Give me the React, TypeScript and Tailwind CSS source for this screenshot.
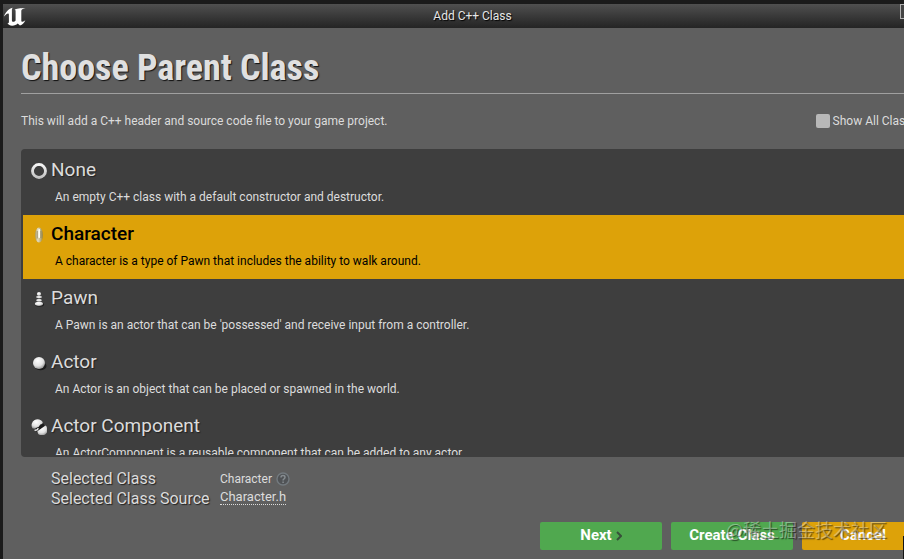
import { useState } from "react";
import type { ReactNode } from "react";

type ParentClass = { name: string; description: string; icon: ReactNode };

function Gradients() {
  return (
    <svg width="0" height="0" className="absolute" aria-hidden="true">
      <defs>
        <radialGradient id="ball" cx="0.4" cy="0.3" r="0.75">
          <stop offset="0" stopColor="#ffffff" />
          <stop offset="0.6" stopColor="#e2e2e2" />
          <stop offset="1" stopColor="#8c8c8c" />
        </radialGradient>
        <linearGradient id="ring" x1="0" y1="0" x2="0" y2="1">
          <stop offset="0" stopColor="#f4f4f4" />
          <stop offset="1" stopColor="#c4c4c4" />
        </linearGradient>
        <linearGradient id="capsule" x1="0" y1="0" x2="1" y2="0">
          <stop offset="0" stopColor="#a89858" />
          <stop offset="0.35" stopColor="#e3dcc0" />
          <stop offset="0.65" stopColor="#c4b888" />
          <stop offset="1" stopColor="#94823e" />
        </linearGradient>
      </defs>
    </svg>
  );
}

const NoneIcon = (
  <svg viewBox="0 0 16 16" className="size-4">
    <circle cx="8" cy="8.6" r="6.4" fill="none" stroke="#2a2a2a" strokeWidth="2.6" />
    <circle cx="8" cy="8" r="6.5" fill="none" stroke="url(#ring)" strokeWidth="2.9" />
  </svg>
);

const CharacterIcon = (
  <svg viewBox="0 0 16 16" className="size-4">
    <ellipse cx="8" cy="8" rx="4" ry="7.600" fill="url(#capsule)" />
    <path d="M8.200 3v7" stroke="#fffdf0" strokeWidth="1.800" strokeLinecap="round" />
    <path d="M6.300 4v7.500M9.900 4v7" stroke="#8d835c" strokeWidth="0.700" />
  </svg>
);

const PawnIcon = (
  <svg viewBox="0 0 16 16" className="size-4">
    <ellipse cx="8.600" cy="13.500" rx="4.400" ry="2.200" fill="#1c1c1c" />
    <circle cx="8" cy="3" r="2.100" fill="url(#ball)" />
    <ellipse cx="8" cy="5.900" rx="3" ry="1" fill="#f0f0f0" />
    <path d="M7 7h2l.7 3H6.300z" fill="#666" />
    <ellipse cx="8" cy="9.200" rx="2.800" ry="1.200" fill="#e6e6e6" />
    <ellipse cx="8" cy="12.800" rx="4.100" ry="2.100" fill="url(#ball)" />
  </svg>
);

const ActorIcon = (
  <svg viewBox="0 0 16 16" className="size-4">
    <ellipse cx="9.500" cy="11" rx="6" ry="4.300" fill="#1c1c1c" />
    <circle cx="8" cy="8" r="6" fill="url(#ball)" />
  </svg>
);

const ActorComponentIcon = (
  <svg viewBox="0 0 16 16" className="size-4">
    <path d="M3 9.500 12.500 4.500 13.500 7 6 13z" fill="#1c1c1c" />
    <path d="M1.400 9.300A6 6 0 0 1 11.900 3.200q-.2 2-2.700 2.400-1 2.600-3.300 3-1.300 1.800-4.500.7z" fill="url(#ball)" />
    <path d="M3.600 11.300q2.800.2 3.700-2" stroke="#eee" strokeWidth="1.600" fill="none" />
    <path d="M6.300 12.300 14.600 6.500A5.600 5.600 0 0 1 7.200 15z" fill="url(#ball)" />
  </svg>
);

const parentClasses: ParentClass[] = [
  { name: "None", description: "An empty C++ class with a default constructor and destructor.", icon: NoneIcon },
  { name: "Character", description: "A character is a type of Pawn that includes the ability to walk around.", icon: CharacterIcon },
  { name: "Pawn", description: "A Pawn is an actor that can be 'possessed' and receive input from a controller.", icon: PawnIcon },
  { name: "Actor", description: "An Actor is an object that can be placed or spawned in the world.", icon: ActorIcon },
  { name: "Actor Component", description: "An ActorComponent is a reusable component that can be added to any actor.", icon: ActorComponentIcon },
];

function TitleBar() {
  return (
    <header className="relative flex h-6 items-center justify-center bg-linear-to-b from-[#505050] to-[#242424]">
      <svg viewBox="0 0 24 20" className="absolute left-0 top-[3px] h-5 w-6" fill="#fff" role="img" aria-label="Unreal Engine">
        <path d="M1 9.500C2.200 5.800 5 2 9.700.800 8.900 1.700 8.900 2.600 8.900 3.900v9.300c0 1 .6 1.600 1.400 1.600.9 0 1.700-.6 2.300-1.400V4.200c0-1-.4-1.400-1.300-1.400C13 1.500 17.500 1 22.500.900c-2.900.8-4.200 1.600-4.200 2.800v9.500c0 1 .4 1.500 1.100 1.500 1 0 2-.5 3-1.700-1.100 2.900-2.900 4.700-5.400 5.400l-2.300-1.900c-1.500 1.300-3 2.200-5.600 2.200-2.200 0-3.500-.8-4.700-2.400 1-.1 1.500-.5 1.500-1.600V7.700c0-.9-.3-1.300-1-1.300-1 0-2 1.200-3.900 3.100z" />
      </svg>
      <span className="text-xs text-[#e6e6e6] [text-shadow:1px_1px_1px_#000]">Add C++ Class</span>
      <button type="button" aria-label="Minimize" className="absolute right-1.5 top-0 h-[15px] w-9 border border-[#b0b0b0] bg-[#444]" />
    </header>
  );
}

export default function App() {
  const [selected, setSelected] = useState("Character");

  return (
    <div className="relative h-screen overflow-hidden bg-[#1b1b1b] font-['Roboto','Liberation_Sans',sans-serif] text-xs text-[#dcdcdc]">
      <Gradients />
      <div className="flex h-full w-[calc(100%+38px)] flex-col pl-[3px] pt-1">
        <TitleBar />
        <main className="flex min-h-0 flex-1 flex-col bg-[#5f5f5f] px-[18px] pb-[9px]">
          <h1 className="mt-[18px] border-b border-[#a0a0a0] pb-0.5 font-['Roboto_Condensed','Roboto',sans-serif] text-4xl font-bold leading-[45px] text-[#e0e0e0] [text-shadow:1px_1px_1px_#111]">
            Choose Parent Class
          </h1>
          <div className="flex items-center justify-between pt-[18px]">
            <p className="leading-[18px]">This will add a C++ header and source code file to your game project.</p>
            <label className="flex items-center gap-[3px] leading-[18px]">
              <input type="checkbox" className="size-3.5 appearance-none rounded-xs bg-[#b8b8b8]" />
              Show All Classes
            </label>
          </div>

          <ul className="mt-[19px] min-h-0 flex-1 overflow-hidden rounded-sm border-2 border-[#3e3e3e] bg-[#3e3e3e]">
            {parentClasses.map((item) => {
              const active = item.name === selected;
              return (
                <li key={item.name}>
                  <button
                    type="button"
                    aria-pressed={active}
                    onClick={() => setSelected(item.name)}
                    className={`flex h-16 w-full flex-col pl-2 pt-[7px] text-left ${active ? "bg-[#dda209] text-black" : "text-[#dcdcdc]"}`}
                  >
                    <span className="flex items-center gap-1">
                      <span className="pt-0.5">{item.icon}</span>
                      <span className={`text-[19px] leading-6 ${active ? "font-medium" : "[text-shadow:1px_1px_1px_#222]"}`}>
                        {item.name}
                      </span>
                    </span>
                    <span className="pl-6 pt-1.5 leading-[18px]">{item.description}</span>
                  </button>
                </li>
              );
            })}
          </ul>

          <dl className="mt-3 grid grid-cols-[169px_1fr] pl-[30px] leading-5">
            <dt className="text-base leading-5 [text-shadow:1px_1px_1px_#222]">Selected Class</dt>
            <dd className="flex items-center gap-1">
              {selected}
              <button type="button" aria-label="Help">
                <svg viewBox="0 0 14 14" className="size-3.5">
                  <circle cx="7" cy="7" r="6" fill="#505356" stroke="#737a7f" strokeWidth="1.400" />
                  <path d="M5 5.500q0-2 2-2t2 1.700q0 1-1 1.600-.9.500-.9 1.600M7.100 9.600v1.400" fill="none" stroke="#868c90" strokeWidth="1.500" />
                </svg>
              </button>
            </dd>
            <dt className="text-base leading-5 [text-shadow:1px_1px_1px_#222]">Selected Class Source</dt>
            <dd className="flex items-start">
              <a href="#source" className="border-b border-dotted border-[#dcdcdc] text-[13px] leading-[15px]">{selected}.h</a>
            </dd>
          </dl>

          <div className="mt-[13px] flex justify-end gap-[9px] text-[15px] font-bold text-white [text-shadow:1px_1px_1px_#111]">
            <button type="button" className="flex h-7 w-[122px] items-center justify-center gap-1 rounded-xs bg-[#50a84f]">
              Next
              <svg viewBox="0 0 6 10" className="h-2.5 w-1.5" fill="none" stroke="#38503a" strokeWidth="2">
                <path d="M1 1l4 4-4 4" />
              </svg>
            </button>
            <button type="button" className="h-7 w-[122px] rounded-xs bg-[#50a84f]">Create Class</button>
            <button type="button" className="h-7 w-[122px] rounded-xs bg-[#dda209]">Cancel</button>
          </div>
        </main>
      </div>
      <span className="pointer-events-none absolute bottom-[18px] right-[17px] font-['Noto_Sans_CJK_SC',sans-serif] text-lg leading-6 text-white/35 [text-shadow:1px_1px_1px_#0008]">
        @稀土掘金技术社区
      </span>
      <div className="absolute bottom-0 right-0 h-[23px] w-px bg-[#151515]" />
    </div>
  );
}
